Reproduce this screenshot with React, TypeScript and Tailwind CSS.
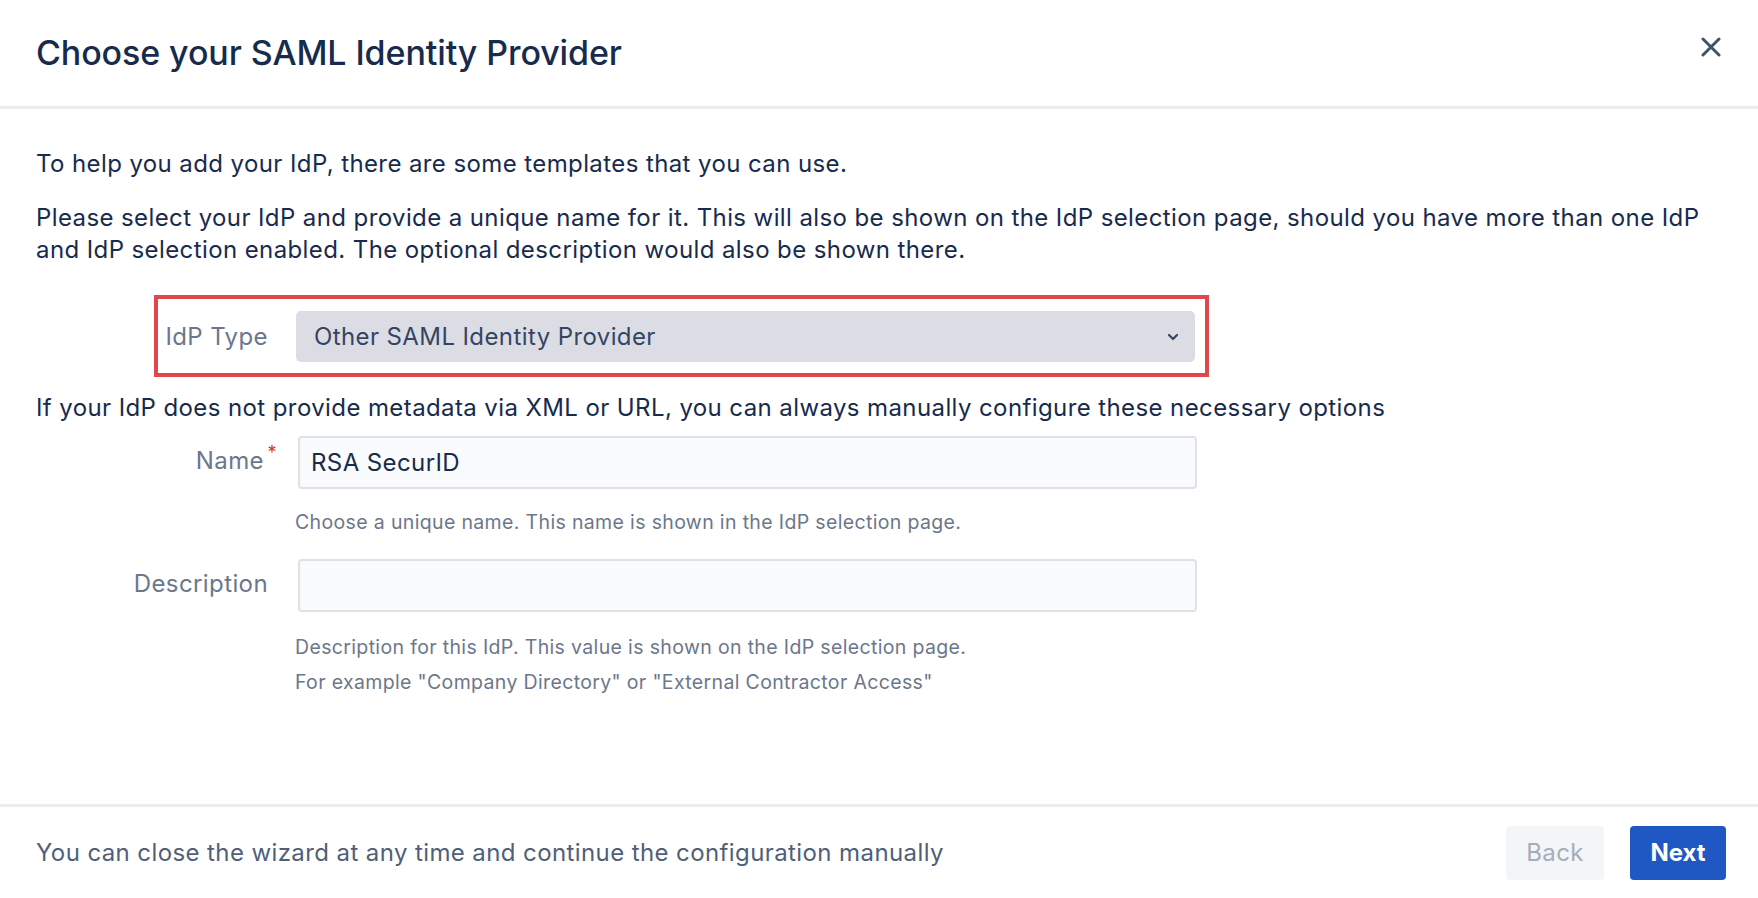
import React from "react";

export default function App() {
  return (
    <div className="w-[1758px] h-[898px] bg-white flex flex-col font-['Inter',sans-serif] text-[#172b4d] overflow-hidden">
      <header className="h-[109px] shrink-0 border-b-[3px] border-[#ebecf0] flex items-center justify-between pl-[36px] pr-[37px]">
        <h1 className="text-[34px] font-medium tracking-[-0.1px] leading-none mt-[-1px]">
          Choose your SAML Identity Provider
        </h1>
        <svg width="20" height="20" viewBox="0 0 20 20" className="mt-[-12px]" fill="none">
          <path d="M2 2 L18 18 M18 2 L2 18" stroke="#42526e" strokeWidth="3" strokeLinecap="round" />
        </svg>
      </header>

      <main className="flex-1 pt-[39px] pl-[36px] pr-[36px] tracking-[0.4px]">
        <p className="text-[24px] leading-[32px]">
          To help you add your IdP, there are some templates that you can use.
        </p>
        <p className="mt-[22px] text-[24px] leading-[32px] whitespace-nowrap">
          <span className="block">
            Please select your IdP and provide a unique name for it. This will also be shown on the IdP selection page, should you have more than one IdP
          </span>
          <span className="block">
            and IdP selection enabled. The optional description would also be shown there.
          </span>
        </p>

        <div className="mt-[29px] ml-[118px] w-[1055px] border-4 border-[#e0474c] flex items-center pt-[12px] pb-[11px] pr-[10px]">
          <div className="w-[110px] text-right text-[24px] text-[#6b778c]">IdP Type</div>
          <div className="ml-[28px] w-[899px] h-[51px] bg-[#dcdde4] rounded-[5px] flex items-center justify-between pl-[18px] pr-[16px]">
            <span className="text-[24px] text-[#344563]">Other SAML Identity Provider</span>
            <svg width="12" height="8" viewBox="0 0 12 8" fill="none">
              <path d="M2 2 L6 6 L10 2" stroke="#344563" strokeWidth="2.2" strokeLinecap="round" strokeLinejoin="round" />
            </svg>
          </div>
        </div>

        <p className="mt-[15px] text-[24px] leading-[32px]">
          If your IdP does not provide metadata via XML or URL, you can always manually configure these necessary options
        </p>

        <div className="mt-[12px] flex items-start">
          <label className="w-[228px] text-right text-[24px] text-[#6b778c] pt-[7px] relative">
            Name
            <span className="absolute right-[-13px] top-[3px] text-[18px] text-[#de350b]">*</span>
          </label>
          <div className="ml-[34px]">
            <div className="w-[899px] h-[53px] border-2 border-[#dfe1e6] bg-[#fafbfc] rounded-[4px] flex items-center pl-[11px]">
              <span className="text-[24px] text-[#172b4d]">RSA SecurID</span>
            </div>
            <p className="mt-[19px] ml-[-3px] text-[19.5px] leading-[28px] tracking-[0.35px] text-[#6b778c]">
              Choose a unique name. This name is shown in the IdP selection page.
            </p>
          </div>
        </div>

        <div className="mt-[23px] flex items-start">
          <label className="w-[232px] text-right text-[24px] text-[#6b778c] pt-[7px]">Description</label>
          <div className="ml-[30px]">
            <div className="w-[899px] h-[53px] border-2 border-[#dfe1e6] bg-[#fafbfc] rounded-[4px]" />
            <p className="mt-[21px] ml-[-3px] text-[19.5px] leading-[28px] tracking-[0.35px] text-[#6b778c]">
              Description for this IdP. This value is shown on the IdP selection page.
            </p>
            <p className="mt-[7px] ml-[-3px] text-[19.5px] leading-[28px] tracking-[0.35px] text-[#6b778c]">
              For example "Company Directory" or "External Contractor Access"
            </p>
          </div>
        </div>
      </main>

      <footer className="h-[94px] shrink-0 border-t-[3px] border-[#ebecf0] flex items-center justify-between pl-[36px] pr-[32px]">
        <span className="text-[24px] tracking-[0.4px] text-[#505f79]">
          You can close the wizard at any time and continue the configuration manually
        </span>
        <div className="flex items-center gap-[26px]">
          <button className="w-[98px] h-[54px] rounded-[4px] bg-[#f4f5f7] text-[24px] tracking-[0.4px] text-[#a5adba]">Back</button>
          <button className="w-[96px] h-[54px] rounded-[4px] bg-[#1f57c3] text-[24px] font-bold text-white">Next</button>
        </div>
      </footer>
    </div>
  );
}
